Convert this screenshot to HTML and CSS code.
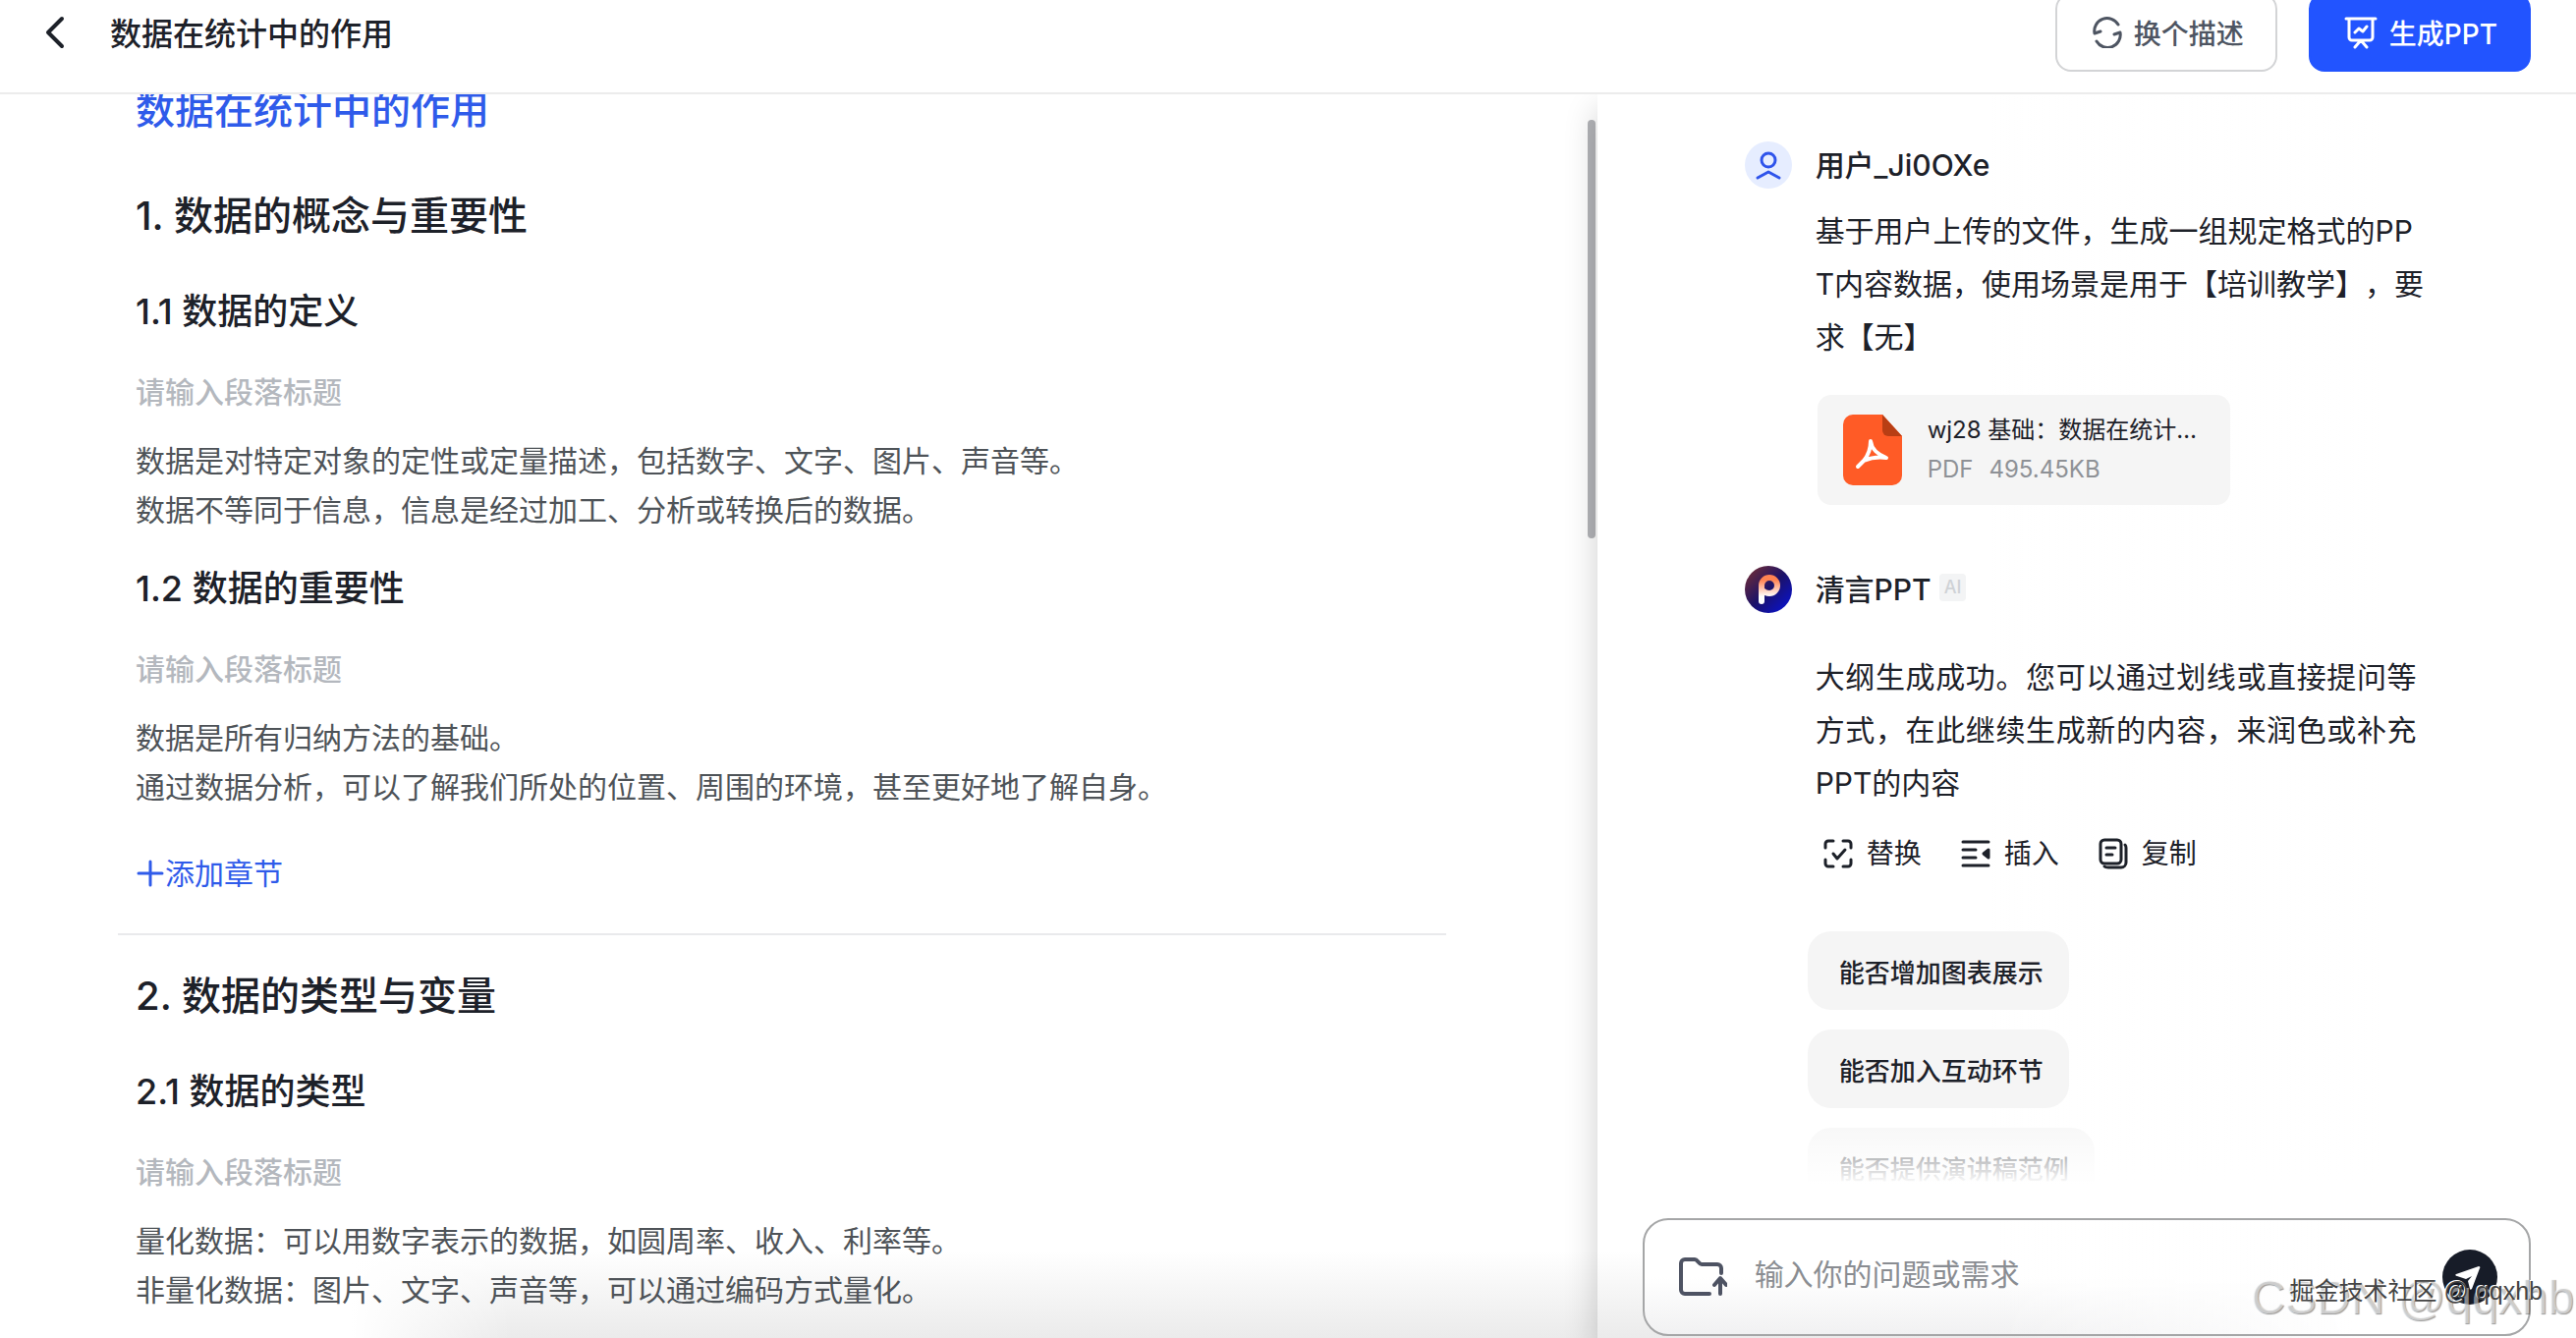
FILE: index.html
```html
<!DOCTYPE html>
<html lang="zh-CN">
<head>
    <meta charset="UTF-8">
    <meta name="viewport" content="width=device-width, initial-scale=1.0">
    <title>数据在统计中的作用</title>
    <link rel="stylesheet" href="styles.css">
</head>
<body>
    <header class="topbar">
        <button class="back-button" aria-label="返回">
            <svg width="24" height="34" viewBox="0 0 24 34" fill="none" stroke="#1d2129" stroke-width="4" stroke-linecap="round" stroke-linejoin="round"><path d="M19 3L5 17l14 14"/></svg>
        </button>
        <div class="topbar-title">数据在统计中的作用</div>
        <button class="top-button">
            <svg width="30" height="32" viewBox="0 0 30 32" fill="none" stroke="currentColor" stroke-width="3" stroke-linecap="round" stroke-linejoin="round"><path d="M26 8A13 13 0 0 0 2 17l6-2M4 25a13 13 0 0 0 24-9l-6 2"/></svg>
            换个描述
        </button>
        <button class="top-button primary">
            <svg width="34" height="34" viewBox="0 0 34 34" fill="none" stroke="currentColor" stroke-width="3" stroke-linecap="round" stroke-linejoin="round"><path d="M2 3h30M5 3v19a3 3 0 0 0 3 3h18a3 3 0 0 0 3-3V3M11 17l4-4 4 3 4-5M17 25l-6 7M17 25l6 7"/></svg>
            生成PPT
        </button>
    </header>

    <main class="workspace">
        <section class="outline">
            <div class="outline-content">
                <h1>数据在统计中的作用</h1>
                <div class="chapter">
                    <h2>1. 数据的概念与重要性</h2>
                    <h3>1.1 数据的定义</h3>
                    <input class="paragraph-title" type="text" placeholder="请输入段落标题" aria-label="1.1 段落标题">
                    <p>数据是对特定对象的定性或定量描述，包括数字、文字、图片、声音等。</p>
                    <p>数据不等同于信息，信息是经过加工、分析或转换后的数据。</p>
                    <h3>1.2 数据的重要性</h3>
                    <input class="paragraph-title" type="text" placeholder="请输入段落标题" aria-label="1.2 段落标题">
                    <p>数据是所有归纳方法的基础。</p>
                    <p>通过数据分析，可以了解我们所处的位置、周围的环境，甚至更好地了解自身。</p>
                    <button class="add-chapter">
                        <svg width="30" height="30" viewBox="0 0 30 30" fill="none" stroke="currentColor" stroke-width="3" stroke-linecap="round"><path d="M15 3v24M3 15h24"/></svg>添加章节
                    </button>
                </div>
                <div class="chapter">
                    <h2>2. 数据的类型与变量</h2>
                    <h3>2.1 数据的类型</h3>
                    <input class="paragraph-title" type="text" placeholder="请输入段落标题" aria-label="2.1 段落标题">
                    <p>量化数据：可以用数字表示的数据，如圆周率、收入、利率等。</p>
                    <p>非量化数据：图片、文字、声音等，可以通过编码方式量化。</p>
                </div>
            </div>
            <div class="scroll-thumb"></div>
        </section>

        <aside class="chat">
            <div class="messages">
                <article class="message">
                    <svg class="avatar" width="48" height="48" viewBox="0 0 48 48" fill="none" stroke="#2f54eb" stroke-width="3" stroke-linecap="round" stroke-linejoin="round"><circle cx="24" cy="24" r="24" fill="#e6edff" stroke="none"/><circle cx="24" cy="19" r="7"/><path d="M13 37l11-6 11 6"/></svg>
                    <div class="message-body">
                        <div class="author">用户_Ji0OXe</div>
                        <p class="message-text user-text">基于用户上传的文件，生成一组规定格式的PPT内容数据，使用场景是用于【培训教学】，要求【无】</p>
                        <a class="file-card" href="#">
                            <svg width="60" height="72" viewBox="0 0 60 72"><path d="M10 0h30l20 22v40a10 10 0 0 1-10 10H10A10 10 0 0 1 0 62V10A10 10 0 0 1 10 0z" fill="#ff5b26"/><path d="M40 0l20 22H46a6 6 0 0 1-6-6z" fill="#b83e14"/><path d="M28 27c1 8 8 14 16 17-8-1-16 0-23 3 5-6 7-13 7-20zM21 47l-6 6" fill="none" stroke="#fff" stroke-width="4" stroke-linecap="round" stroke-linejoin="round"/></svg>
                            <span class="file-info">
                                <span class="file-name">wj28 基础：数据在统计…</span>
                                <span class="file-meta"><span>PDF</span><span>495.45KB</span></span>
                            </span>
                        </a>
                    </div>
                </article>

                <article class="message reply">
                    <svg class="avatar" width="48" height="48" viewBox="0 0 48 48">
                        <defs>
                            <linearGradient id="disc" x1="0" y1="0" x2="1" y2="1"><stop offset="0.1" stop-color="#6a2a3a"/><stop offset=".5" stop-color="#1c1268"/><stop offset=".9" stop-color="#0a12c8"/></linearGradient>
                            <linearGradient id="mark" x1="0" y1="0" x2="0" y2="1"><stop offset=".1" stop-color="#ff8352"/><stop offset=".8" stop-color="#fff"/></linearGradient>
                        </defs>
                        <circle cx="24" cy="24" r="24" fill="url(#disc)"/>
                        <path d="M17 36V20a8 8 0 1 1 8 8c-3 0-5-1-7-3" fill="none" stroke="url(#mark)" stroke-width="6" stroke-linecap="round"/>
                    </svg>
                    <div class="message-body">
                        <div class="author">清言PPT <span class="ai-badge">AI</span></div>
                        <p class="message-text reply-text">大纲生成成功。您可以通过划线或直接提问等方式，在此继续生成新的内容，来润色或补充PPT的内容</p>
                        <div class="actions">
                            <button>
                                <svg width="30" height="30" viewBox="0 0 30 30" fill="none" stroke="currentColor" stroke-width="3" stroke-linecap="round" stroke-linejoin="round"><path d="M2 9V5a3 3 0 0 1 3-3h5M20 2h5a3 3 0 0 1 3 3v4M28 21v4a3 3 0 0 1-3 3h-5M10 28H5a3 3 0 0 1-3-3v-4M10 15l4 5 8-9"/></svg>
                                替换
                            </button>
                            <button>
                                <svg width="30" height="30" viewBox="0 0 30 30" fill="none" stroke="currentColor" stroke-width="3" stroke-linecap="round" stroke-linejoin="round"><path d="M2 3h26M2 11h13M2 19h13M2 27h26"/><path d="M28 11v8l-5-4z" fill="currentColor"/></svg>
                                插入
                            </button>
                            <button>
                                <svg width="30" height="32" viewBox="0 0 30 32" fill="none" stroke="currentColor" stroke-width="3" stroke-linecap="round" stroke-linejoin="round"><rect x="2" y="2" width="21" height="24" rx="4"/><path d="M8 10h9M8 17h6M27 7c1 1 1 2 1 3v15a5 5 0 0 1-5 5H10c-2 0-3 0-4-1"/></svg>
                                复制
                            </button>
                        </div>
                    </div>
                </article>

                <div class="suggestions">
                    <button>能否增加图表展示</button>
                    <button>能否加入互动环节</button>
                    <button>能否提供演讲稿范例</button>
                </div>
            </div>

            <form class="composer">
                <button type="button" class="upload-button" aria-label="上传文件">
                    <svg width="50" height="40" viewBox="0 0 50 40" fill="none" stroke="#4e5363" stroke-width="4" stroke-linecap="round" stroke-linejoin="round"><path d="M32 37H7a4 4 0 0 1-4-4V6a4 4 0 0 1 4-4h10c3 0 4 5 7 5h16a4 4 0 0 1 4 4v5M43 37V23M37 28l6-7 6 7"/></svg>
                </button>
                <input type="text" placeholder="输入你的问题或需求" aria-label="输入你的问题或需求">
                <button type="submit" class="send-button" aria-label="发送">
                    <svg width="56" height="56" viewBox="0 0 56 56"><circle cx="28" cy="28" r="28" fill="#171c28"/><path d="M14 25l23-8c1 0 2 1 1 2l-8 21c-1 1-2 1-2 0l-2-8 4-5-6 3-9-3c-2 0-2-2-1-2z" fill="#fff"/></svg>
                </button>
            </form>
        </aside>
    </main>

    <div class="watermark watermark-large">CSDN @qqxhb</div>
    <div class="watermark watermark-small">掘金技术社区 @ qqxhb</div>
</body>
</html>
```

FILE: styles.css
```css
* {
    box-sizing: border-box;
}

body {
    font-family: Inter, "Noto Sans CJK SC", sans-serif;
    margin: 0;
    height: 100vh;
    display: flex;
    flex-direction: column;
    overflow: hidden;
    position: relative;
    background: #fff;
    color: #1d2129;
    text-spacing-trim: space-all;
}

h1, h2, h3, p {
    margin: 0;
}

button, input {
    font-family: inherit;
    color: inherit;
    border: none;
    background: none;
    padding: 0;
    margin: 0;
    outline: none;
}

button {
    display: flex;
    align-items: center;
    cursor: pointer;
}

svg {
    flex-shrink: 0;
}

/* top bar */
.topbar {
    display: flex;
    align-items: center;
    height: 96px;
    padding: 0 46px 28px 44px;
    border-bottom: 2px solid #ececec;
    flex-shrink: 0;
}

.topbar-title {
    flex: 1;
    margin-left: 44px;
    padding-bottom: 2px;
    font-size: 32px;
    font-weight: 500;
}

.top-button {
    height: 80px;
    padding: 0 32px 0 36px;
    gap: 12px;
    border: 2px solid #d3d4d6;
    border-radius: 16px;
    font-size: 28px;
    font-weight: 500;
    color: #4e5562;
}

.top-button.primary {
    margin-left: 32px;
    padding: 0 32px 0 34px;
    border-color: #2254ff;
    background: #2254ff;
    color: #fff;
}

.workspace {
    display: flex;
    flex: 1;
    min-height: 0;
}

/* outline editor */
.outline {
    width: 62%;
    position: relative;
    overflow: hidden;
    background:
        linear-gradient(to right, #fff 22%, rgba(255,255,255,0) 32%),
        linear-gradient(to bottom, #fff 93%, #ebebeb);
}

.outline-content {
    margin-top: -12px;
    padding: 0 154px 0 120px;
}

.outline h1 {
    padding-left: 18px;
    margin-bottom: 52px;
    font-size: 40px;
    line-height: 56px;
    font-weight: 500;
    color: #2f5bea;
}

.chapter {
    padding: 0 18px 36px;
    margin-bottom: 34px;
    border-bottom: 2px solid #e9eaec;
}

.chapter:last-child {
    border-bottom: none;
}

.chapter h2 {
    margin-bottom: 44px;
    font-size: 40px;
    line-height: 56px;
    font-weight: 500;
}

.chapter h3 {
    margin: 30px 0 32px;
    font-size: 36px;
    line-height: 50px;
    font-weight: 500;
}

.chapter h2 + h3 {
    margin-top: 0;
}

.chapter p {
    font-size: 30px;
    line-height: 50px;
    color: #4e5358;
}

.paragraph-title {
    display: block;
    width: 100%;
    height: 50px;
    margin-bottom: 20px;
    font-size: 30px;
    font-weight: 500;
}

.paragraph-title::placeholder {
    color: #b4b8be;
    opacity: 1;
}

.add-chapter {
    margin-top: 38px;
    font-size: 30px;
    line-height: 50px;
    color: #2f5bea;
}

.scroll-thumb {
    position: absolute;
    top: 26px;
    right: 2px;
    width: 8px;
    height: 426px;
    border-radius: 4px;
    background: #b3b4b8;
}

/* chat panel */
.chat {
    flex: 1;
    min-width: 0;
    display: flex;
    flex-direction: column;
    padding: 0 46px 2px;
    position: relative;
    box-shadow: 0 16px 32px rgba(0,0,0,0.2);
    clip-path: inset(0 0 0 -60px);
    background:
        linear-gradient(to left, #fff 20%, rgba(255,255,255,0) 60%),
        linear-gradient(to bottom, #fff 93%, #ebebeb);
}

.messages {
    flex: 1;
    min-height: 0;
    overflow: hidden;
    padding: 48px 104px 0 104px;
    position: relative;
}

/* fades the last suggestion out above the composer */
.messages::after {
    content: "";
    position: absolute;
    left: 0;
    right: 0;
    bottom: 0;
    height: 100px;
    background: linear-gradient(to bottom, rgba(255,255,255,0.2), rgba(255,255,255,0.6) 30%, #fff 66%);
}

.message {
    display: flex;
    gap: 24px;
}

.message-body {
    flex: 1;
    min-width: 0;
}

.author {
    display: flex;
    align-items: center;
    gap: 8px;
    height: 44px;
    font-size: 30px;
    font-weight: 500;
}

.message-text {
    font-size: 30px;
    line-height: 54px;
}

.user-text {
    margin-top: 20px;
    word-break: break-all;
}

.reply-text {
    max-width: 612px;
    margin-top: 42px;
    text-align: justify;
}

.file-card {
    display: flex;
    align-items: center;
    gap: 26px;
    width: 420px;
    height: 112px;
    margin: 32px 0 0 2px;
    padding-left: 26px;
    border-radius: 14px;
    background: #f5f5f5;
    color: inherit;
    text-decoration: none;
}

.file-info {
    display: flex;
    flex-direction: column;
    font-size: 24px;
    line-height: 40px;
}

.file-meta {
    display: flex;
    gap: 16px;
    color: #8e9196;
}

.reply {
    margin-top: 62px;
}

.ai-badge {
    padding: 0 5px;
    border-radius: 4px;
    background: #f3f4f5;
    color: #cfd2d6;
    font-size: 18px;
    line-height: 28px;
}

.actions {
    display: flex;
    gap: 40px;
    margin: 20px 0 0 8px;
}

.actions button {
    gap: 14px;
    font-size: 28px;
    line-height: 50px;
}

.suggestions {
    display: flex;
    flex-direction: column;
    align-items: flex-start;
    gap: 20px;
    margin: 54px 0 0 64px;
}

.suggestions button {
    flex-shrink: 0;
    height: 80px;
    padding: 0 26px 0 32px;
    border-radius: 24px;
    background: #f5f5f5;
    font-size: 26px;
    font-weight: 500;
}

.composer {
    display: flex;
    align-items: center;
    height: 120px;
    flex-shrink: 0;
    padding: 0 32px 0 34px;
    border: 2px solid #a5a6a7;
    border-radius: 26px;
    background:
        linear-gradient(to left, #fff 20%, rgba(255,255,255,0) 60%),
        linear-gradient(to bottom, #fff 50%, #f1f1f2);
}

.composer input {
    flex: 1;
    min-width: 0;
    margin-left: 28px;
    padding-bottom: 6px;
    font-size: 30px;
}

.composer input::placeholder {
    color: #8a8d92;
    opacity: 1;
}

/* watermarks */
.watermark {
    position: absolute;
    white-space: nowrap;
    pointer-events: none;
}

.watermark-large {
    right: 2px;
    bottom: 14px;
    font-family: "Liberation Sans", sans-serif;
    font-size: 48px;
    color: rgba(255,255,255,0.5);
    text-shadow: 1px 1px 1px rgba(0,0,0,0.4);
}

.watermark-small {
    right: 34px;
    bottom: 32px;
    font-family: "Liberation Sans", "Noto Sans CJK SC", sans-serif;
    font-size: 25px;
    color: #444;
    text-shadow: -1px -1px 0 #fff;
}
```
